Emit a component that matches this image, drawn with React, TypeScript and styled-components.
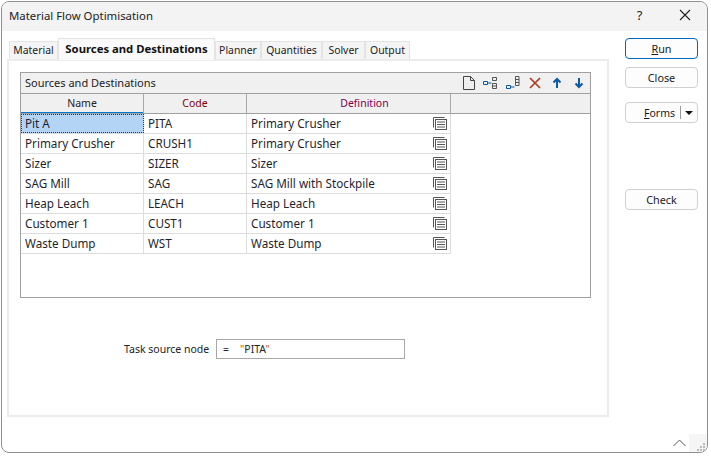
import React from 'react';
import styled, { createGlobalStyle } from 'styled-components';

const GlobalStyle = createGlobalStyle`
  html, body {
    margin: 0;
    padding: 0;
    background: #fff;
  }
  body {
    width: 711px;
    height: 456px;
    overflow: hidden;
    font-family: 'Noto Sans', 'Open Sans', sans-serif;
    font-size: 11px;
    color: #1a1a1a;
  }
`;

const Page = styled.div`
  width: 711px;
  height: 456px;
  padding: 1px 3px 3px 1px;
  box-sizing: border-box;
`;

const Window = styled.div`
  position: relative;
  height: 100%;
  box-sizing: border-box;
  border: 1px solid #8f8f8f;
  border-radius: 8px;
  background: #fff;
  display: flex;
  flex-direction: column;
  overflow: hidden;
`;

const TitleBar = styled.div`
  height: 29px;
  flex: none;
  box-sizing: border-box;
  background: #f3f3f3;
  display: flex;
  align-items: center;
  padding: 0 0 3px 7px;
`;

const Title = styled.div`
  flex: 1;
  font-size: 11.4px;
  color: #222;
`;

const TitleButton = styled.div`
  width: 45px;
  display: flex;
  justify-content: center;
  font-size: 13px;
  color: #222;
`;

const Body = styled.div`
  flex: 1;
  display: flex;
  padding: 7px 9px 0 5px;
`;

const TabArea = styled.div`
  width: 602px;
  flex: none;
`;

const TabStrip = styled.div`
  height: 21px;
  display: flex;
  align-items: flex-end;
  padding-left: 2px;
`;

const Tab = styled.div<{ $active?: boolean; $width: number }>`
  width: ${(p) => p.$width}px;
  height: ${(p) => (p.$active ? 22 : 18)}px;
  box-sizing: border-box;
  display: flex;
  align-items: center;
  justify-content: center;
  padding-bottom: 2px;
  background: ${(p) => (p.$active ? '#fafafa' : '#f4f4f4')};
  border: 1px solid #e4e4e4;
  border-bottom: none;
  margin-bottom: ${(p) => (p.$active ? -1 : 0)}px;
  position: relative;
  font-size: ${(p) => (p.$active ? 11.3 : 10.4)}px;
  font-weight: ${(p) => (p.$active ? 700 : 400)};
  color: ${(p) => (p.$active ? '#111' : '#222')};
`;

const TabPanel = styled.div`
  height: 358px;
  box-sizing: border-box;
  background: #fff;
  border: 2px solid #ececec;
  padding: 11px 16px 0 11px;
`;

const Group = styled.div`
  height: 226px;
  box-sizing: border-box;
  border: 1px solid #a0a0a0;
  background: #fff;
`;

const GroupHeader = styled.div`
  height: 21px;
  box-sizing: border-box;
  background: #f0f0f0;
  border-bottom: 1px solid #a0a0a0;
  display: flex;
  align-items: center;
  justify-content: space-between;
  padding: 0 3px 0 4px;
`;

const GroupTitle = styled.span`
  font-size: 11px;
  color: #222;
  padding-bottom: 2px;
`;

const Toolbar = styled.div`
  display: flex;
  align-items: center;
  gap: 6px;
`;

const ToolIcon = styled.svg`
  width: 16px;
  height: 16px;
  display: block;
  fill: none;
`;

const ColumnRow = styled.div`
  display: grid;
  grid-template-columns: 123px 103px 204px 1fr;
  height: 20px;
  box-sizing: border-box;
  background: #f0f0f0;
  border-bottom: 1px solid #a0a0a0;
`;

const ColumnHead = styled.div<{ $color?: string; $selected?: boolean; $shift?: number }>`
  display: flex;
  align-items: center;
  justify-content: center;
  box-sizing: border-box;
  padding-left: ${(p) => p.$shift || 0}px;
  padding-bottom: 1px;
  border-right: 1px solid #a8a8a8;
  font-size: 10.5px;
  color: ${(p) => p.$color || '#222'};
  box-shadow: ${(p) => (p.$selected ? 'inset 0 -1px 0 #0078d4' : 'none')};

  &:last-child {
    border-right: none;
  }
`;

const DataRow = styled.div`
  display: grid;
  grid-template-columns: 123px 103px 204px;
  height: 20px;
  width: 430px;
  box-sizing: border-box;
  border-bottom: 1px solid #dcdcdc;
`;

const Cell = styled.div<{ $selected?: boolean }>`
  display: flex;
  align-items: center;
  justify-content: space-between;
  box-sizing: border-box;
  padding: 0 3px 0 4px;
  border-right: 1px solid #dcdcdc;
  font-size: 11.7px;
  color: #1f1f2e;
  white-space: nowrap;
  background: ${(p) => (p.$selected ? '#b3d4f5' : '#fff')};
  outline: ${(p) => (p.$selected ? '1px dotted #333' : 'none')};
  outline-offset: -1px;
`;

const CellText = styled.span`
  padding-bottom: 2px;
`;

const FieldRow = styled.div`
  display: flex;
  align-items: center;
  margin-top: 41px;
  padding-left: 104px;
  gap: 7px;
`;

const FieldLabel = styled.label`
  font-size: 10.5px;
  width: 85px;
  white-space: nowrap;
  color: #222;
`;

const FieldBox = styled.div`
  width: 189px;
  height: 20px;
  box-sizing: border-box;
  border: 1px solid #a8a8a8;
  display: flex;
  align-items: center;
  padding-left: 6px;
  gap: 11px;
  font-size: 10.5px;
  color: #222;
`;

const Quote = styled.span`
  color: #c05a00;
`;

const ButtonColumn = styled.div`
  margin-left: 16px;
  width: 73px;
  display: flex;
  flex-direction: column;
`;

const Button = styled.div<{ $primary?: boolean; $top: number }>`
  height: 21px;
  margin-top: ${(p) => p.$top}px;
  box-sizing: border-box;
  border: 1px solid ${(p) => (p.$primary ? '#0067c0' : '#d0d0d0')};
  border-radius: 4px;
  background: #fdfdfd;
  display: flex;
  align-items: center;
  justify-content: center;
  font-size: 10.8px;
  color: #1a1a1a;

  u {
    text-underline-offset: 1px;
  }
`;

const FormsLabel = styled.span`
  flex: 1;
  text-align: right;
  padding-right: 5px;
  font-size: 10.5px;
`;

const SplitArrow = styled.span`
  width: 16px;
  height: 13px;
  border-left: 1px solid #9a9a9a;
  display: flex;
  align-items: center;
  justify-content: center;

  &::after {
    content: '';
    border-left: 4px solid transparent;
    border-right: 4px solid transparent;
    border-top: 4px solid #111;
  }
`;

const ResizeGrip = styled.div`
  position: absolute;
  right: 0;
  bottom: 0;
  width: 18px;
  height: 18px;
  background: #f5f5f5;
  display: flex;
  align-items: flex-end;
  justify-content: flex-end;
`;

const CollapseIcon = styled.svg`
  position: absolute;
  right: 21px;
  bottom: 5px;
  width: 13px;
  height: 8px;
  fill: none;
`;

const rows = [
  ['Pit A', 'PITA', 'Primary Crusher'],
  ['Primary Crusher', 'CRUSH1', 'Primary Crusher'],
  ['Sizer', 'SIZER', 'Sizer'],
  ['SAG Mill', 'SAG', 'SAG Mill with Stockpile'],
  ['Heap Leach', 'LEACH', 'Heap Leach'],
  ['Customer 1', 'CUST1', 'Customer 1'],
  ['Waste Dump', 'WST', 'Waste Dump'],
];

const tabs: [string, number][] = [
  ['Material', 49],
  ['Sources and Destinations', 157],
  ['Planner', 46],
  ['Quantities', 61],
  ['Solver', 43],
  ['Output', 45],
];

function ListIcon() {
  return (
    <svg width="14" height="13" viewBox="0 0 14 13" fill="none" stroke="#555" strokeWidth="1">
      <path d="M0.5 10.5V0.5H11.5" />
      <rect x="2.5" y="2.5" width="11" height="10" />
      <path d="M4 5h8M4 7.5h8M4 10h8" />
    </svg>
  );
}

export default function App() {
  return (
    <Page>
      <GlobalStyle />
      <Window>
        <TitleBar>
          <Title>Material Flow Optimisation</Title>
          <TitleButton>?</TitleButton>
          <TitleButton>
            <svg width="12" height="12" viewBox="0 0 12 12" stroke="#222" strokeWidth="1.1">
              <path d="M1 1l10 10M11 1L1 11" />
            </svg>
          </TitleButton>
        </TitleBar>
        <Body>
          <TabArea>
            <TabStrip>
              {tabs.map(([label, width], i) => (
                <Tab key={label} $width={width} $active={i === 1}>
                  {label}
                </Tab>
              ))}
            </TabStrip>
            <TabPanel>
              <Group>
                <GroupHeader>
                  <GroupTitle>Sources and Destinations</GroupTitle>
                  <Toolbar>
                    <ToolIcon viewBox="0 0 16 16" stroke="#444">
                      <path d="M2.5 1.5h7l4 4v9h-11zM9.5 1.5v4h4" />
                    </ToolIcon>
                    <ToolIcon viewBox="0 0 16 16">
                      <path d="M0.5 6.5h4v3h-4z" stroke="#0a5aa5" />
                      <path d="M4.5 8h4" stroke="#0a5aa5" />
                      <path d="M9.5 2.5h4v3h-4zM9.5 8.5h4v5h-4zM9.5 11h4" stroke="#555" />
                    </ToolIcon>
                    <ToolIcon viewBox="0 0 16 16">
                      <path d="M1.5 10.5h4v3h-4z" stroke="#0a5aa5" />
                      <path d="M5.5 12h4" stroke="#0a5aa5" />
                      <path d="M10.5 1.5h3.5v9h-3.5zM10.5 4.5h3.5M10.5 7.5h3.5" stroke="#555" />
                    </ToolIcon>
                    <ToolIcon viewBox="0 0 16 16" stroke="#b23a22" strokeWidth="1.7">
                      <path d="M3 3l10 10M13 3L3 13" />
                    </ToolIcon>
                    <ToolIcon viewBox="0 0 16 16" stroke="#0a5aa5" strokeWidth="2">
                      <path d="M8 13V5M4.5 7.5L8 4l3.5 3.5" />
                    </ToolIcon>
                    <ToolIcon viewBox="0 0 16 16" stroke="#0a5aa5" strokeWidth="2">
                      <path d="M8 3v8M4.5 8.5L8 12l3.5-3.5" />
                    </ToolIcon>
                  </Toolbar>
                </GroupHeader>
                <ColumnRow>
                  <ColumnHead $selected>Name</ColumnHead>
                  <ColumnHead $color="#800000">Code</ColumnHead>
                  <ColumnHead $color="#800050" $shift={32}>
                    Definition
                  </ColumnHead>
                  <ColumnHead />
                </ColumnRow>
                {rows.map((row, i) => (
                  <DataRow key={row[0]}>
                    <Cell $selected={i === 0}>
                      <CellText>{row[0]}</CellText>
                    </Cell>
                    <Cell>
                      <CellText>{row[1]}</CellText>
                    </Cell>
                    <Cell>
                      <CellText>{row[2]}</CellText>
                      <ListIcon />
                    </Cell>
                  </DataRow>
                ))}
              </Group>
              <FieldRow>
                <FieldLabel>Task source node</FieldLabel>
                <FieldBox>
                  <span>=</span>
                  <span>
                    <Quote>"</Quote>PITA<Quote>"</Quote>
                  </span>
                </FieldBox>
              </FieldRow>
            </TabPanel>
          </TabArea>
          <ButtonColumn>
            <Button $primary $top={0}>
              <span>
                <u>R</u>un
              </span>
            </Button>
            <Button $top={8}>Close</Button>
            <Button $top={14}>
              <FormsLabel>
                <u>F</u>orms
              </FormsLabel>
              <SplitArrow />
            </Button>
            <Button $top={66}>Check</Button>
          </ButtonColumn>
        </Body>
        <CollapseIcon viewBox="0 0 13 8" stroke="#555">
          <path d="M0.5 7L6.5 1l6 6" />
        </CollapseIcon>
        <ResizeGrip>
          <svg width="10" height="10" viewBox="0 0 10 10" fill="#bbb">
            <rect x="6" y="1" width="2" height="2" />
            <rect x="3" y="4" width="2" height="2" />
            <rect x="6" y="4" width="2" height="2" />
            <rect x="0" y="7" width="2" height="2" />
            <rect x="3" y="7" width="2" height="2" />
            <rect x="6" y="7" width="2" height="2" />
          </svg>
        </ResizeGrip>
      </Window>
    </Page>
  );
}
